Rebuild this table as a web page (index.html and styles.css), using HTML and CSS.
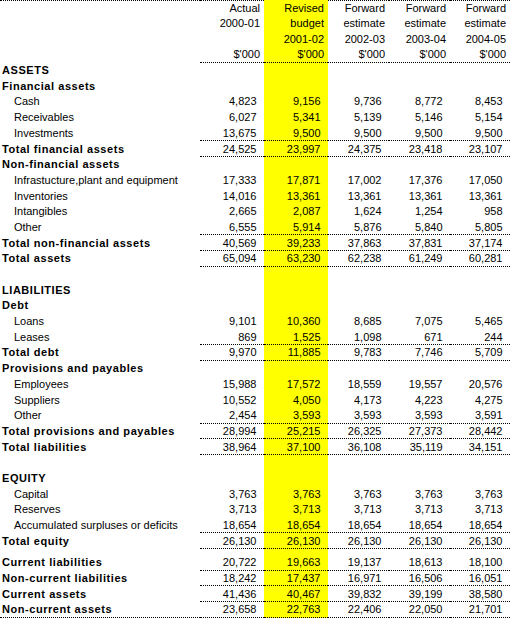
FILE: index.html
```html
<!DOCTYPE html>
<html lang="en">
<head>
    <meta charset="UTF-8">
    <meta name="viewport" content="width=device-width, initial-scale=1.0">
    <title>Budget statement</title>
    <link rel="stylesheet" href="styles.css">
</head>
<body>
    <table class="budget">
        <colgroup>
            <col class="c-label">
            <col class="c-wide">
            <col class="c-wide">
            <col class="c-narrow">
            <col class="c-narrow">
            <col class="c-last">
        </colgroup>
        <tr class="top">
            <td class="lbl"></td>
            <td class="head">Actual</td>
            <td class="head hl">Revised</td>
            <td class="head">Forward</td>
            <td class="head">Forward</td>
            <td class="head">Forward</td>
        </tr>
        <tr>
            <td class="lbl"></td>
            <td class="head">2000-01</td>
            <td class="head hl">budget</td>
            <td class="head">estimate</td>
            <td class="head">estimate</td>
            <td class="head">estimate</td>
        </tr>
        <tr>
            <td class="lbl"></td>
            <td class="head"></td>
            <td class="head hl">2001-02</td>
            <td class="head">2002-03</td>
            <td class="head">2003-04</td>
            <td class="head">2004-05</td>
        </tr>
        <tr class="rule">
            <td class="lbl"></td>
            <td class="head">$'000</td>
            <td class="head hl">$'000</td>
            <td class="head">$'000</td>
            <td class="head">$'000</td>
            <td class="head">$'000</td>
        </tr>

        <!-- assets -->
        <tr>
            <td class="lbl b">ASSETS</td>
            <td class="num"></td><td class="num hl"></td><td class="num"></td><td class="num"></td><td class="num"></td>
        </tr>
        <tr>
            <td class="lbl b">Financial assets</td>
            <td class="num"></td><td class="num hl"></td><td class="num"></td><td class="num"></td><td class="num"></td>
        </tr>
        <tr>
            <td class="lbl sub">Cash</td>
            <td class="num">4,823</td><td class="num hl">9,156</td><td class="num">9,736</td><td class="num">8,772</td><td class="num">8,453</td>
        </tr>
        <tr>
            <td class="lbl sub">Receivables</td>
            <td class="num">6,027</td><td class="num hl">5,341</td><td class="num">5,139</td><td class="num">5,146</td><td class="num">5,154</td>
        </tr>
        <tr class="rule">
            <td class="lbl sub">Investments</td>
            <td class="num">13,675</td><td class="num hl">9,500</td><td class="num">9,500</td><td class="num">9,500</td><td class="num">9,500</td>
        </tr>
        <tr class="rule">
            <td class="lbl b">Total financial assets</td>
            <td class="num">24,525</td><td class="num hl">23,997</td><td class="num">24,375</td><td class="num">23,418</td><td class="num">23,107</td>
        </tr>
        <tr>
            <td class="lbl b">Non-financial assets</td>
            <td class="num"></td><td class="num hl"></td><td class="num"></td><td class="num"></td><td class="num"></td>
        </tr>
        <tr>
            <td class="lbl sub">Infrastucture,plant and equipment</td>
            <td class="num">17,333</td><td class="num hl">17,871</td><td class="num">17,002</td><td class="num">17,376</td><td class="num">17,050</td>
        </tr>
        <tr>
            <td class="lbl sub">Inventories</td>
            <td class="num">14,016</td><td class="num hl">13,361</td><td class="num">13,361</td><td class="num">13,361</td><td class="num">13,361</td>
        </tr>
        <tr>
            <td class="lbl sub">Intangibles</td>
            <td class="num">2,665</td><td class="num hl">2,087</td><td class="num">1,624</td><td class="num">1,254</td><td class="num">958</td>
        </tr>
        <tr class="rule">
            <td class="lbl sub">Other</td>
            <td class="num">6,555</td><td class="num hl">5,914</td><td class="num">5,876</td><td class="num">5,840</td><td class="num">5,805</td>
        </tr>
        <tr class="rule">
            <td class="lbl b">Total non-financial assets</td>
            <td class="num">40,569</td><td class="num hl">39,233</td><td class="num">37,863</td><td class="num">37,831</td><td class="num">37,174</td>
        </tr>
        <tr class="rule">
            <td class="lbl b">Total assets</td>
            <td class="num">65,094</td><td class="num hl">63,230</td><td class="num">62,238</td><td class="num">61,249</td><td class="num">60,281</td>
        </tr>
        <tr>
            <td class="lbl"></td>
            <td class="num"></td><td class="num hl"></td><td class="num"></td><td class="num"></td><td class="num"></td>
        </tr>

        <!-- liabilities -->
        <tr>
            <td class="lbl b">LIABILITIES</td>
            <td class="num"></td><td class="num hl"></td><td class="num"></td><td class="num"></td><td class="num"></td>
        </tr>
        <tr>
            <td class="lbl b">Debt</td>
            <td class="num"></td><td class="num hl"></td><td class="num"></td><td class="num"></td><td class="num"></td>
        </tr>
        <tr>
            <td class="lbl sub">Loans</td>
            <td class="num">9,101</td><td class="num hl">10,360</td><td class="num">8,685</td><td class="num">7,075</td><td class="num">5,465</td>
        </tr>
        <tr class="rule">
            <td class="lbl sub">Leases</td>
            <td class="num">869</td><td class="num hl">1,525</td><td class="num">1,098</td><td class="num">671</td><td class="num">244</td>
        </tr>
        <tr class="rule">
            <td class="lbl b">Total debt</td>
            <td class="num">9,970</td><td class="num hl">11,885</td><td class="num">9,783</td><td class="num">7,746</td><td class="num">5,709</td>
        </tr>
        <tr>
            <td class="lbl b">Provisions and payables</td>
            <td class="num"></td><td class="num hl"></td><td class="num"></td><td class="num"></td><td class="num"></td>
        </tr>
        <tr>
            <td class="lbl sub">Employees</td>
            <td class="num">15,988</td><td class="num hl">17,572</td><td class="num">18,559</td><td class="num">19,557</td><td class="num">20,576</td>
        </tr>
        <tr>
            <td class="lbl sub">Suppliers</td>
            <td class="num">10,552</td><td class="num hl">4,050</td><td class="num">4,173</td><td class="num">4,223</td><td class="num">4,275</td>
        </tr>
        <tr class="rule">
            <td class="lbl sub">Other</td>
            <td class="num">2,454</td><td class="num hl">3,593</td><td class="num">3,593</td><td class="num">3,593</td><td class="num">3,591</td>
        </tr>
        <tr class="rule">
            <td class="lbl b">Total provisions and payables</td>
            <td class="num">28,994</td><td class="num hl">25,215</td><td class="num">26,325</td><td class="num">27,373</td><td class="num">28,442</td>
        </tr>
        <tr class="rule">
            <td class="lbl b">Total liabilities</td>
            <td class="num">38,964</td><td class="num hl">37,100</td><td class="num">36,108</td><td class="num">35,119</td><td class="num">34,151</td>
        </tr>
        <tr>
            <td class="lbl"></td>
            <td class="num"></td><td class="num hl"></td><td class="num"></td><td class="num"></td><td class="num"></td>
        </tr>

        <!-- equity -->
        <tr>
            <td class="lbl b">EQUITY</td>
            <td class="num"></td><td class="num hl"></td><td class="num"></td><td class="num"></td><td class="num"></td>
        </tr>
        <tr>
            <td class="lbl sub">Capital</td>
            <td class="num">3,763</td><td class="num hl">3,763</td><td class="num">3,763</td><td class="num">3,763</td><td class="num">3,763</td>
        </tr>
        <tr>
            <td class="lbl sub">Reserves</td>
            <td class="num">3,713</td><td class="num hl">3,713</td><td class="num">3,713</td><td class="num">3,713</td><td class="num">3,713</td>
        </tr>
        <tr class="rule">
            <td class="lbl sub">Accumulated surpluses or deficits</td>
            <td class="num">18,654</td><td class="num hl">18,654</td><td class="num">18,654</td><td class="num">18,654</td><td class="num">18,654</td>
        </tr>
        <tr class="rule">
            <td class="lbl b">Total equity</td>
            <td class="num">26,130</td><td class="num hl">26,130</td><td class="num">26,130</td><td class="num">26,130</td><td class="num">26,130</td>
        </tr>
        <tr class="gap">
            <td class="lbl"></td>
            <td class="num"></td><td class="num hl"></td><td class="num"></td><td class="num"></td><td class="num"></td>
        </tr>

        <!-- summary -->
        <tr class="rule">
            <td class="lbl b">Current liabilities</td>
            <td class="num">20,722</td><td class="num hl">19,663</td><td class="num">19,137</td><td class="num">18,613</td><td class="num">18,100</td>
        </tr>
        <tr class="rule">
            <td class="lbl b">Non-current liabilities</td>
            <td class="num">18,242</td><td class="num hl">17,437</td><td class="num">16,971</td><td class="num">16,506</td><td class="num">16,051</td>
        </tr>
        <tr class="rule">
            <td class="lbl b">Current assets</td>
            <td class="num">41,436</td><td class="num hl">40,467</td><td class="num">39,832</td><td class="num">39,199</td><td class="num">38,580</td>
        </tr>
        <tr class="rule end">
            <td class="lbl b">Non-current assets</td>
            <td class="num">23,658</td><td class="num hl">22,763</td><td class="num">22,406</td><td class="num">22,050</td><td class="num">21,701</td>
        </tr>
    </table>
</body>
</html>
```

FILE: styles.css
```css
body {
    margin: 0;
    background-color: #fff;
    color: #000;
    font-family: "Liberation Sans", Arial, sans-serif;
    font-size: 11px;
}
.budget {
    width: 510px;
    table-layout: fixed;
    border-collapse: separate;
    border-spacing: 0;
}
.c-label {
    width: 200px;
}
.c-wide {
    width: 64px;
}
.c-narrow {
    width: 61px;
}
.c-last {
    width: 60px;
}
.budget td {
    box-sizing: border-box;
    height: 15.7px;
    padding: 0;
    line-height: 12px;
    vertical-align: middle;
    white-space: nowrap;
    border-bottom: 1px solid transparent;
}
.budget tr.gap td {
    height: 6px;
    line-height: 0;
    border-bottom: 0;
}
.budget tr.top td {
    border-top: 1px dotted #000;
}
.budget tr.top td.hl {
    border-top-color: transparent;
}
.budget tr.rule td.num,
.budget tr.rule td.head,
.budget tr.end td {
    border-bottom: 1px dotted #000;
}
.lbl {
    padding-left: 2px !important;
    text-align: left;
}
.lbl.sub {
    padding-left: 14px !important;
}
.lbl.b {
    font-weight: bold;
    letter-spacing: 0.55px;
}
.head {
    text-align: right;
    padding-right: 4px !important;
}
.num {
    text-align: right;
    padding-right: 7.5px !important;
}
.hl {
    background-color: #ffff00;
}
```
